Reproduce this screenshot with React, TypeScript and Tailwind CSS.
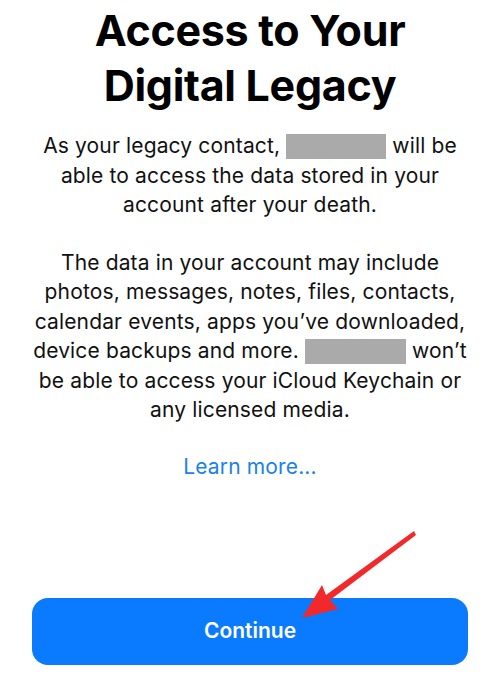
import React from "react";

const Redact = ({ w }: { w: number }) => (
  <span
    className="inline-block bg-[#aaaaaa] align-[-6px] h-[25px]"
    style={{ width: w }}
  />
);

export default function App() {
  return (
    <div className="relative w-[500px] h-[695px] bg-white overflow-hidden font-['Inter','Noto_Sans',sans-serif] text-black">
      <div className="flex flex-col items-center">
        <h1 className="mt-[3px] text-center text-[43px] leading-[55px] font-bold tracking-[-0.3px]">
          Access to Your
          <br />
          Digital Legacy
        </h1>
        <p className="mt-[18px] px-[20px] text-center text-[21px] leading-[29.5px] tracking-[0.15px] text-[#111]">
          As your legacy contact, <Redact w={100} /> will be
          <br />
          able to access the data stored in your
          <br />
          account after your death.
        </p>
        <p className="mt-[28px] px-[10px] text-center text-[21px] leading-[29.5px] tracking-[0.15px] text-[#111]">
          The data in your account may include
          <br />
          photos, messages, notes, files, contacts,
          <br />
          calendar events, apps you’ve downloaded,
          <br />
          device backups and more. <Redact w={101} /> won’t
          <br />
          be able to access your iCloud Keychain or
          <br />
          any licensed media.
        </p>
        <a className="mt-[27px] text-[21px] leading-[29px] tracking-[0.15px] text-[#1a82e8]">
          Learn more...
        </a>
        <button className="mt-[117px] w-[436px] h-[67px] rounded-[16px] bg-[#0a7aff] text-white text-[21px] font-semibold">
          Continue
        </button>
      </div>
      <svg
        className="absolute left-0 top-0 pointer-events-none"
        width="500"
        height="695"
        viewBox="0 0 500 695"
      >
        <path
          d="M414 531 L416 535 L330 600 L338 609 L302 618 L322 585 L326 595 Z"
          fill="#f2292b"
        />
      </svg>
    </div>
  );
}
